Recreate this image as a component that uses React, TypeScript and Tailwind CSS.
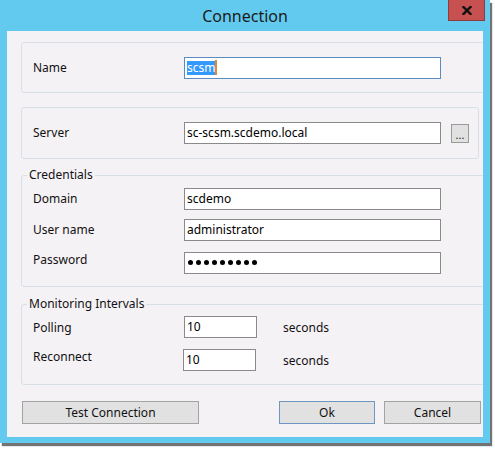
import React from "react";

const font = { fontFamily: '"Noto Sans", "Open Sans", sans-serif' };

function TextBox({
  children,
  width = "w-[257px]",
  focused = false,
}: {
  children?: React.ReactNode;
  width?: string;
  focused?: boolean;
}) {
  return (
    <div
      className={`flex h-[22px] ${width} items-center border bg-white pl-[2px] text-[12px] leading-none text-black ${
        focused ? "border-[#5a8cbf]" : "border-[#8a8a8a]"
      }`}
    >
      {children}
    </div>
  );
}

function Row({
  label,
  children,
  labelClass = "",
}: {
  label: string;
  children: React.ReactNode;
  labelClass?: string;
}) {
  return (
    <div className="flex items-center">
      <div className={`w-[151px] text-[12px] text-[#111] ${labelClass}`}>{label}</div>
      {children}
    </div>
  );
}

function Button({
  children,
  width,
  primary = false,
}: {
  children: React.ReactNode;
  width: string;
  primary?: boolean;
}) {
  return (
    <button
      className={`flex h-[23px] ${width} items-center justify-center border bg-[#e1e1e1] text-[12px] text-[#111] ${
        primary ? "border-[#6b97c2]" : "border-[#a3a3a3]"
      }`}
    >
      {children}
    </button>
  );
}

export default function App() {
  return (
    <div className="min-h-[452px] w-[495px] bg-white" style={font}>
      <div className="flex h-[443px] w-[490px] flex-col bg-[#62caee] shadow-[2px_3px_1px_rgba(0,0,0,0.55)]">
        {/* title bar */}
        <div className="relative flex h-[31px] items-center justify-center">
          <span className="text-[16px] leading-none text-[#1b1b1b]">Connection</span>
          <div className="absolute right-[5px] top-0 flex h-[21px] w-[37px] items-center justify-center border border-t-0 border-[#8d3b3b] bg-[#c75151]">
            <svg width="10" height="9" viewBox="0 0 10 9">
              <path d="M1.5 1 L8.5 8 M8.5 1 L1.5 8" stroke="#111" strokeWidth="2.4" strokeLinecap="square" />
            </svg>
          </div>
        </div>

        {/* client area */}
        <div className="ml-[7px] flex h-[406px] w-[476px] flex-col overflow-hidden bg-[#f5f2f6] pl-[14px] pt-[11px]">
          {/* name */}
          <div className="flex h-[51px] w-[480px] shrink-0 items-center rounded-[3px] border border-[#d8dfe6] pl-[11px]">
            <Row label="Name">
              <TextBox focused>
                <span className="flex h-[14px] items-center bg-[#3399ff] text-white">scsm</span>
                <span className="h-[15px] w-[2px] bg-[#e08a2c]" />
              </TextBox>
            </Row>
          </div>

          {/* server */}
          <div className="mt-[14px] flex h-[52px] w-[458px] shrink-0 items-center rounded-[3px] border border-[#d8dfe6] pl-[11px]">
            <Row label="Server">
              <TextBox>sc-scsm.scdemo.local</TextBox>
              <div className="ml-[10px] flex h-[19px] w-[18px] items-end justify-center border border-[#9a9a9a] bg-[#e1e1e1] pb-[2px] text-[11px] leading-none text-[#222]">
                ...
              </div>
            </Row>
          </div>

          {/* credentials */}
          <fieldset className="mt-[8px] w-[480px] shrink-0 rounded-[3px] border border-[#d8dfe6] px-[11px] pb-[12px] pt-[5px]">
            <legend className="-ml-[6px] px-[2px] text-[12px] leading-[16px] text-[#111]">Credentials</legend>
            <div className="flex flex-col gap-[9px]">
              <Row label="Domain">
                <TextBox>scdemo</TextBox>
              </Row>
              <Row label="User name">
                <TextBox>administrator</TextBox>
              </Row>
              <div className="mt-[1px]">
                <Row label="Password" labelClass="mb-[5px]">
                  <TextBox>
                    <div className="flex gap-[3px] pl-[1px]">
                      {Array.from({ length: 9 }).map((_, i) => (
                        <span key={i} className="h-[5px] w-[5px] rounded-full bg-black" />
                      ))}
                    </div>
                  </TextBox>
                </Row>
              </div>
            </div>
          </fieldset>

          {/* monitoring */}
          <fieldset className="mt-[9px] w-[480px] shrink-0 rounded-[3px] border border-[#d8dfe6] px-[11px] pb-[12px] pt-[4px]">
            <legend className="-ml-[6px] px-[2px] text-[12px] leading-[16px] text-[#111]">Monitoring Intervals</legend>
            <div className="flex flex-col gap-[10px]">
              <div className="flex items-center">
                <div className="mt-[2px] w-[151px] text-[12px] text-[#111]">Polling</div>
                <TextBox width="w-[73px]">10</TextBox>
                <span className="ml-[26px] mt-[2px] text-[12px] text-[#111]">seconds</span>
              </div>
              <div className="flex items-center">
                <div className="mb-[6px] w-[150px] text-[12px] text-[#111]">Reconnect</div>
                <TextBox width="w-[73px]">10</TextBox>
                <span className="ml-[27px] mt-[2px] text-[12px] text-[#111]">seconds</span>
              </div>
            </div>
          </fieldset>

          {/* buttons */}
          <div className="mt-[16px] flex pl-[1px]">
            <Button width="w-[177px]">Test Connection</Button>
            <div className="ml-[80px] flex gap-[9px]">
              <Button width="w-[96px]" primary>
                Ok
              </Button>
              <Button width="w-[97px]">Cancel</Button>
            </div>
          </div>
        </div>
      </div>
    </div>
  );
}
